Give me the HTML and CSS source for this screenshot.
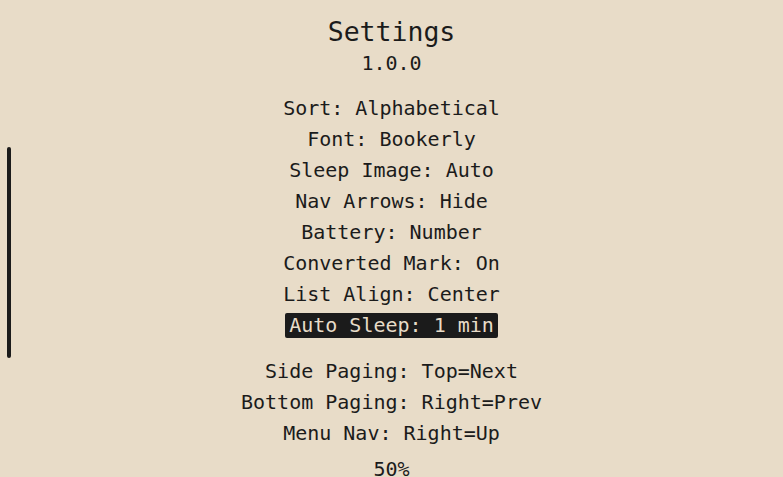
FILE: index.html
```html
<!DOCTYPE html>
<html>
 <head>
  <meta charset="UTF-8">
  <title>Settings</title>
  <link rel="stylesheet" href="styles.css">
 </head>
 <body>
  <div id="screen">
   <div class="scroll"></div>
   <div class="title">Settings</div>
   <div class="version">1.0.0</div>
   <ul class="menu">
    <li>Sort: Alphabetical</li>
    <li>Font: Bookerly</li>
    <li>Sleep Image: Auto</li>
    <li>Nav Arrows: Hide</li>
    <li>Battery: Number</li>
    <li>Converted Mark: On</li>
    <li>List Align: Center</li>
    <li><span class="on">Auto Sleep: 1 min</span></li>
   </ul>
   <ul class="menu second">
    <li>Side Paging: Top=Next</li>
    <li>Bottom Paging: Right=Prev</li>
    <li>Menu Nav: Right=Up</li>
   </ul>
   <div class="page">50%</div>
  </div>
 </body>
</html>
```

FILE: styles.css
```css
*{ margin:0; padding:0;}

html,body{
 background:#e8dcc8;
}

#screen{
 width:783px;
 height:477px;
 overflow:hidden;
 position:relative;
 display:flex;
 flex-direction:column;
 align-items:center;
 padding-top:15px;
 box-sizing:border-box;
 color:#1b1b1b;
 font-family:"DejaVu Sans Mono","Liberation Mono",monospace;
 font-size:20px;
}

/* scrollbar on the left edge */
.scroll{
 position:absolute;
 left:7px;
 top:147px;
 width:4px;
 height:211px;
 border-radius:2px;
 background:#1b1b1b;
}

.title{
 font-size:26.5px;
 line-height:34px;
}

.version{
 line-height:28px;
}

.menu{
 list-style:none;
 margin-top:16px;
 text-align:center;
}
.menu li{
 line-height:31px;
 height:31px;
}
.menu.second{ margin-top:15px;}

.menu .on{
 display:inline-block;
 line-height:25px;
 padding:0 4px;
 margin-top:3px;
 border-radius:2px;
 background:#1b1b1b;
 color:#e8dcc8;
}

.page{
 margin-top:5px;
 line-height:31px;
}
```
